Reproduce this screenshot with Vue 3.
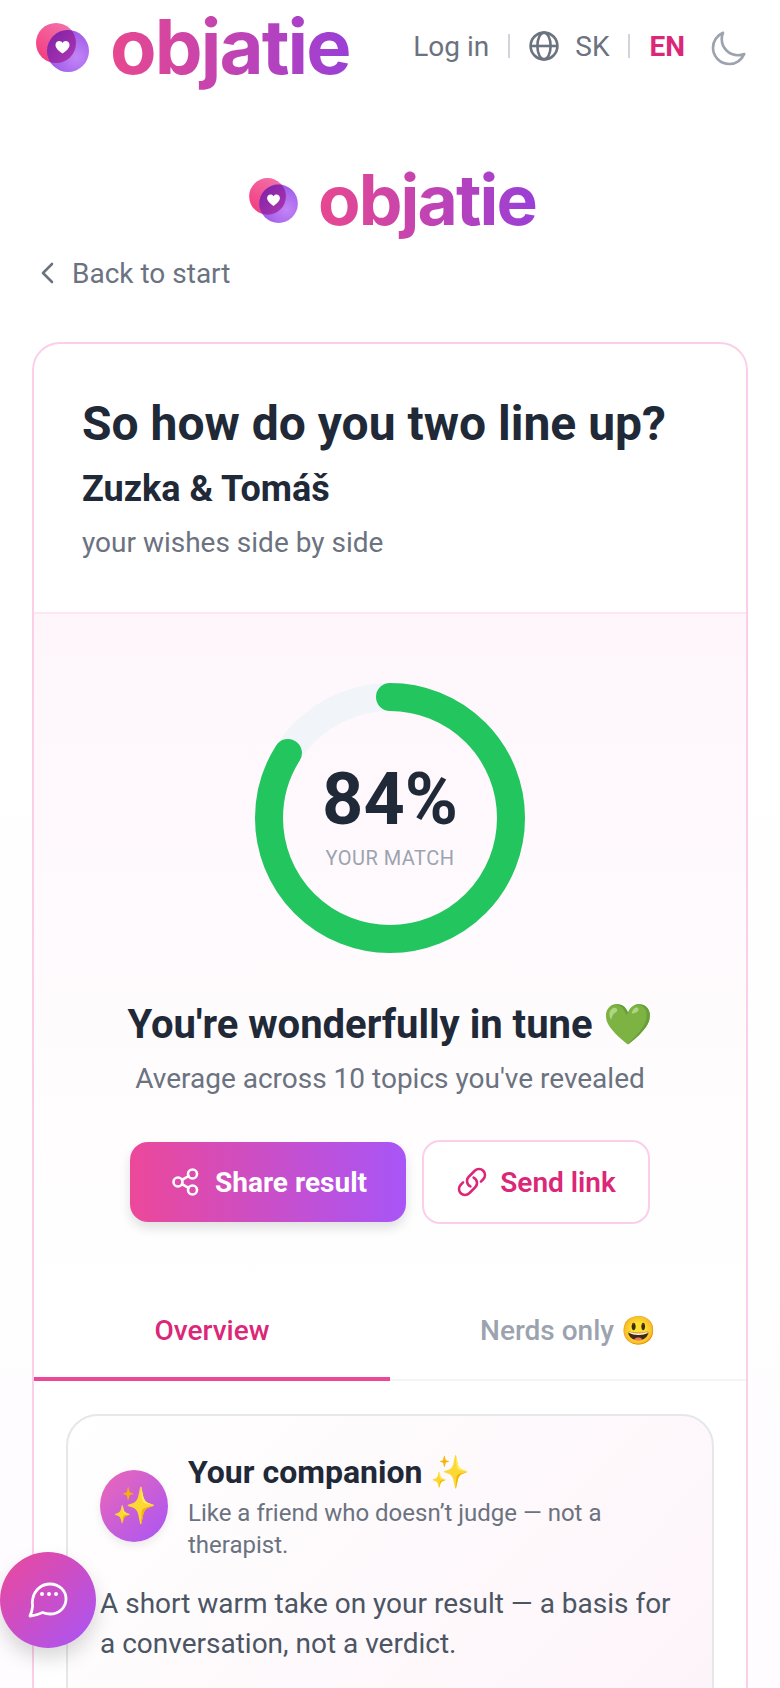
<script setup>
const radius = 121;
const circumference = 2 * Math.PI * radius;
const percent = 84;
const dash = `${(circumference * percent) / 100} ${circumference}`;
</script>

<template>
  <div class="page">
    <header class="topbar">
      <div class="brand">
        <svg class="mark" viewBox="0 1 53 49" width="53" height="49">
          <defs>
            <linearGradient id="pinkFill" x1="0.8" y1="0" x2="0.2" y2="1">
              <stop offset="0" stop-color="#f272ab" />
              <stop offset="1" stop-color="#f43a7c" />
            </linearGradient>
            <radialGradient id="purpleFill" cx="0.7" cy="0.65" r="0.7">
              <stop offset="0" stop-color="#c285f7" />
              <stop offset="1" stop-color="#9a55e6" />
            </radialGradient>
            <linearGradient id="overlapFill" x1="0" y1="0" x2="1" y2="1">
              <stop offset="0" stop-color="#7d1fa6" />
              <stop offset="1" stop-color="#c040b4" />
            </linearGradient>
            <clipPath id="overlap"><circle cx="20" cy="21" r="20" /></clipPath>
          </defs>
          <circle cx="20" cy="21" r="20" fill="url(#pinkFill)" />
          <circle cx="32" cy="29" r="21" fill="url(#purpleFill)" />
          <g clip-path="url(#overlap)">
            <circle cx="32" cy="29" r="21" fill="url(#overlapFill)" />
          </g>
          <path d="M26.5 31.5c-4-3-7-5.4-7-8.6 0-2.3 1.8-3.9 3.8-3.9 1.3 0 2.5.7 3.2 1.9.7-1.2 1.9-1.9 3.2-1.9 2 0 3.8 1.6 3.8 3.9 0 3.2-3 5.6-7 8.6Z" fill="#fff" />
        </svg>
        <span class="wordmark">objatie</span>
      </div>
      <nav class="tools">
        <span class="tool-link">Log in</span>
        <i class="sep"></i>
        <svg class="globe" viewBox="0 0 30 30" width="30" height="30" fill="none" stroke="#6b7280" stroke-width="2.6">
          <circle cx="15" cy="15" r="13.4" />
          <path d="M1.6 15h26.8" />
          <ellipse cx="15" cy="15" rx="6.6" ry="13.4" />
        </svg>
        <span class="tool-link sk">SK</span>
        <i class="sep"></i>
        <span class="lang-on">EN</span>
        <svg class="moon" viewBox="0 0 24 24" width="40" height="40" fill="none" stroke="#9ca3af" stroke-width="1.6" stroke-linejoin="round">
          <path d="M21.752 15.002A9.72 9.72 0 0 1 18 15.75c-5.385 0-9.75-4.365-9.75-9.75 0-1.33.266-2.597.748-3.752A9.753 9.753 0 0 0 3 11.25C3 16.635 7.365 21 12.75 21a9.753 9.753 0 0 0 9.002-5.998Z" />
        </svg>
      </nav>
    </header>

    <div class="brand-center">
      <svg class="mark-small" viewBox="0 1 53 49" width="49" height="45">
        <circle cx="20" cy="21" r="20" fill="url(#pinkFill)" />
        <circle cx="32" cy="29" r="21" fill="url(#purpleFill)" />
        <g clip-path="url(#overlap)">
          <circle cx="32" cy="29" r="21" fill="url(#overlapFill)" />
        </g>
        <path d="M26.5 31.5c-4-3-7-5.4-7-8.6 0-2.3 1.8-3.9 3.8-3.9 1.3 0 2.5.7 3.2 1.9.7-1.2 1.9-1.9 3.2-1.9 2 0 3.8 1.6 3.8 3.9 0 3.2-3 5.6-7 8.6Z" fill="#fff" />
      </svg>
      <span class="wordmark small">objatie</span>
    </div>

    <div class="back">
      <svg viewBox="0 0 14 22" width="14" height="22" fill="none" stroke="#6b7280" stroke-width="2.6" stroke-linecap="round" stroke-linejoin="round">
        <path d="M12 2 3 11l9 9" />
      </svg>
      <span>Back to start</span>
    </div>

    <main class="card">
      <section class="card-head">
        <h1>So how do you two line up?</h1>
        <h2>Zuzka &amp; Tomáš</h2>
        <p>your wishes side by side</p>
      </section>

      <section class="result">
        <div class="ring">
          <svg viewBox="0 0 270 270" width="270" height="270">
            <circle cx="135" cy="135" :r="radius" fill="none" stroke="#f1f5f9" stroke-width="28" />
            <circle
              cx="135"
              cy="135"
              :r="radius"
              fill="none"
              stroke="#22c55e"
              stroke-width="28"
              stroke-linecap="round"
              :stroke-dasharray="dash"
              transform="rotate(-90 135 135)"
            />
          </svg>
          <div class="ring-label">
            <strong>{{ percent }}%</strong>
            <span>YOUR MATCH</span>
          </div>
        </div>

        <h3>You're wonderfully in tune 💚</h3>
        <p class="average">Average across 10 topics you've revealed</p>

        <div class="actions">
          <button type="button" class="btn primary">
            <svg viewBox="0 0 30 30" width="30" height="30" fill="none" stroke="#fff" stroke-width="2.6" stroke-linecap="round">
              <circle cx="7" cy="15" r="4.5" />
              <circle cx="21.500" cy="7" r="4.500" />
              <circle cx="21.500" cy="23" r="4.500" />
              <path d="m11 12.800 6.500-3.600M11 17.200l6.500 3.600" />
            </svg>
            Share result
          </button>
          <button type="button" class="btn outline">
            <svg viewBox="0 0 24 24" width="32" height="32" fill="none" stroke="#db2777" stroke-width="1.9" stroke-linecap="round" stroke-linejoin="round">
              <path d="M13.19 8.688a4.5 4.5 0 0 1 1.242 7.244l-4.5 4.5a4.5 4.5 0 0 1-6.364-6.364l1.757-1.757m13.35-.622 1.757-1.757a4.5 4.5 0 0 0-6.364-6.364l-4.5 4.5a4.5 4.5 0 0 0 1.242 7.244" />
            </svg>
            Send link
          </button>
        </div>
      </section>

      <div class="tabs">
        <div class="tab active">Overview</div>
        <div class="tab">Nerds only 😃</div>
      </div>

      <section class="companion">
        <div class="companion-head">
          <div class="avatar">✨</div>
          <div class="companion-text">
            <h4>Your companion ✨</h4>
            <p>Like a friend who doesn’t judge — not a therapist.</p>
          </div>
        </div>
        <p class="take">A short warm take on your result — a basis for a conversation, not a verdict.</p>
      </section>
    </main>

    <button type="button" class="fab" aria-label="Chat">
      <svg viewBox="0 0 40 38" width="40" height="38" fill="none" stroke="#fff" stroke-width="2.8" stroke-linejoin="round">
        <path d="M22 3c9 0 16 6.500 16 15s-7 15-16 15c-3 0-5-.6-7.500-1.500C11 33 6 34.800 2 35c1.500-3 2.300-6.500 2.600-10C4.200 23 4 20.500 4.800 17.500 6.500 9 13.500 3 22 3Z" />
        <g fill="#fff" stroke="none">
          <circle cx="14" cy="13" r="2" />
          <circle cx="21" cy="13" r="2" />
          <circle cx="28" cy="13" r="2" />
        </g>
      </svg>
    </button>
  </div>
</template>

<style scoped>
.page {
  height: 1688px;
  overflow: hidden;
  box-sizing: border-box;
  padding: 0 32px;
  background: linear-gradient(180deg, #ffffff 0%, #ffffff 40%, #fefcfe 100%);
  color: #1f2937;
  font-family: Roboto, "Noto Sans", sans-serif;
}

.topbar {
  display: flex;
  align-items: center;
  justify-content: space-between;
  height: 92px;
}

.brand {
  display: flex;
  align-items: center;
  gap: 21px;
  margin-left: 4px;
}

.mark {
  flex-shrink: 0;
  margin-top: 2px;
}

.wordmark {
  font-family: Inter, sans-serif;
  font-size: 76px;
  font-weight: 700;
  line-height: 92px;
  letter-spacing: -1.9px;
  background: linear-gradient(90deg, #e8488f 0%, #9a3fd6 100%);
  -webkit-background-clip: text;
  background-clip: text;
  color: transparent;
}

.wordmark.small {
  font-size: 69.5px;
  line-height: 90px;
  letter-spacing: -1.9px;
}

.tools {
  display: flex;
  align-items: center;
  font-size: 28px;
  color: #6b7280;
}

.sep {
  width: 2px;
  height: 24px;
  background: #d1d5db;
  margin: 0 19px;
}

.sk {
  margin-left: 16px;
}

.lang-on {
  font-weight: 700;
  color: #db2777;
}

.moon {
  margin: 6px 0 0 23px;
}

.brand-center {
  display: flex;
  align-items: center;
  justify-content: center;
  gap: 20px;
  height: 90px;
  margin-top: 63px;
  padding-left: 5px;
}

.back {
  display: flex;
  align-items: center;
  gap: 18px;
  margin-top: 8px;
  padding-left: 8px;
  height: 40px;
  font-size: 28px;
  color: #6b7280;
}

.card {
  margin-top: 49px;
  border: 2px solid #fbcfe8;
  border-radius: 28px;
  background: #fff;
  overflow: hidden;
}

.card-head {
  box-sizing: border-box;
  height: 270px;
  padding: 52px 48px 0;
  border-bottom: 2px solid #fce7f3;
}

h1 {
  margin: 0;
  font-size: 48px;
  font-weight: 700;
  line-height: 56px;
  color: #1f2937;
}

h2 {
  margin: 15px 0 0;
  font-size: 36px;
  font-weight: 700;
  line-height: 44px;
  color: #1f2937;
}

.card-head p {
  margin: 12px 0 0;
  font-size: 28px;
  line-height: 40px;
  color: #6b7280;
}

.result {
  display: flex;
  flex-direction: column;
  align-items: center;
  padding: 69px 0 0;
  height: 685px;
  box-sizing: border-box;
  background: linear-gradient(180deg, #fef6fb 0%, #ffffff 100%);
}

.ring {
  position: relative;
  width: 270px;
  height: 270px;
}

.ring svg {
  display: block;
}

.ring-label {
  position: absolute;
  inset: 0;
  display: flex;
  flex-direction: column;
  align-items: center;
  justify-content: center;
  padding-bottom: 4px;
  box-sizing: border-box;
}

.ring-label strong {
  font-size: 72px;
  font-weight: 700;
  line-height: 80px;
  color: #1f2937;
}

.ring-label span {
  margin-top: 4px;
  font-size: 20px;
  line-height: 28px;
  letter-spacing: 0.5px;
  color: #9ca3af;
}

h3 {
  margin: 46px 0 0;
  font-size: 40px;
  font-weight: 700;
  line-height: 52px;
  color: #1f2937;
}

.average {
  margin: 8px 0 0;
  font-size: 28px;
  line-height: 40px;
  color: #6b7280;
}

.actions {
  display: flex;
  align-items: center;
  gap: 16px;
  margin-top: 41px;
}

.btn {
  display: flex;
  align-items: center;
  justify-content: center;
  gap: 12px;
  box-sizing: border-box;
  border-radius: 18px;
  font-family: inherit;
  font-size: 28px;
  font-weight: 700;
}

.primary {
  gap: 14px;
  width: 276px;
  height: 80px;
  padding: 0 0 0 2px;
  border: none;
  color: #fff;
  background: linear-gradient(90deg, #ec4899, #a855f7);
  box-shadow: 0 6px 12px rgba(0, 0, 0, 0.12);
}

.outline {
  width: 228px;
  height: 84px;
  border: 2px solid #fbcfe8;
  background: #fff;
  color: #db2777;
  font-weight: 600;
}

.tabs {
  display: flex;
  border-bottom: 2px solid #f3f4f6;
}

.tab {
  flex: 1;
  height: 82px;
  box-sizing: border-box;
  padding-top: 12px;
  margin-bottom: -2px;
  text-align: center;
  font-size: 28px;
  font-weight: 500;
  line-height: 40px;
  color: #9ca3af;
}

.tab.active {
  color: #db2777;
  border-bottom: 4px solid #ec4899;
}

.companion {
  margin: 33px 32px 0;
  padding: 34px 32px 32px;
  height: 400px;
  border: 2px solid #e5e7eb;
  border-radius: 32px;
  background: linear-gradient(135deg, #ffffff, #fdf2f8);
}

.companion-head {
  display: flex;
  align-items: center;
  gap: 20px;
}

.avatar {
  flex-shrink: 0;
  display: flex;
  align-items: center;
  justify-content: center;
  width: 68px;
  height: 72px;
  border-radius: 50%;
  font-size: 36px;
  background: linear-gradient(135deg, #ec68b5, #a855f7);
  box-shadow: 0 4px 8px rgba(0, 0, 0, 0.08);
}

.companion-text h4 {
  margin: 0;
  font-size: 32px;
  font-weight: 700;
  line-height: 44px;
  color: #1f2937;
}

.companion-text p {
  margin: 3px 0 0;
  font-size: 24px;
  line-height: 32px;
  color: #6b7280;
}

.take {
  margin: 23px 0 0;
  font-size: 28px;
  line-height: 40px;
  color: #4b5563;
}

.fab {
  position: fixed;
  left: 0;
  top: 1552px;
  display: flex;
  align-items: center;
  justify-content: center;
  width: 96px;
  height: 96px;
  padding: 0;
  border: none;
  border-radius: 50%;
  background: linear-gradient(135deg, #ec4899, #a855f7);
  box-shadow: 0 10px 20px rgba(0, 0, 0, 0.16);
}
</style>
